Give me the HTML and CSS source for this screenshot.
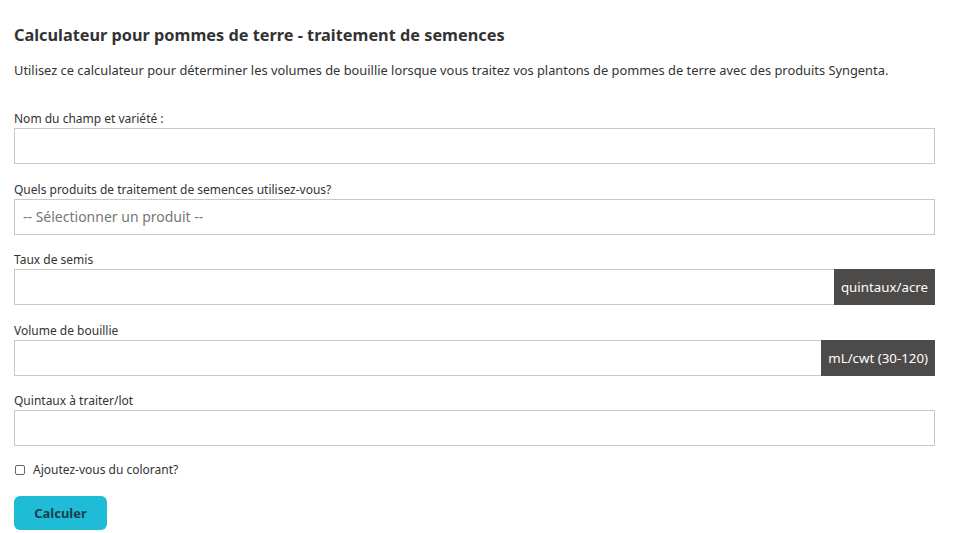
FILE: index.html
```html
<!DOCTYPE html>
<html lang="fr">
<head>
<meta charset="utf-8">
<title>Calculateur</title>
<link rel="stylesheet" href="styles.css">
</head>
<body>
<main class="calc">
  <h1 class="title">Calculateur pour pommes de terre - traitement de semences</h1>
  <p class="intro">Utilisez ce calculateur pour déterminer les volumes de bouillie lorsque vous traitez vos plantons de pommes de terre avec des produits Syngenta.</p>
  <form class="form">
    <div class="field">
      <label class="label">Nom du champ et variété :</label>
      <input class="input" type="text">
    </div>
    <div class="field">
      <label class="label">Quels produits de traitement de semences utilisez-vous?</label>
      <div class="input select">-- Sélectionner un produit --</div>
    </div>
    <div class="field">
      <label class="label">Taux de semis</label>
      <div class="group">
        <input class="input grow" type="text">
        <span class="addon">quintaux/acre</span>
      </div>
    </div>
    <div class="field">
      <label class="label">Volume de bouillie</label>
      <div class="group">
        <input class="input grow" type="text">
        <span class="addon">mL/cwt (30-120)</span>
      </div>
    </div>
    <div class="field">
      <label class="label">Quintaux à traiter/lot</label>
      <input class="input" type="text">
    </div>
    <label class="check"><span class="box"></span>Ajoutez-vous du colorant?</label>
    <button class="btn" type="button">Calculer</button>
  </form>
</main>
</body>
</html>
```
FILE: styles.css
```css
* { box-sizing: border-box; }
html, body { margin: 0; background: #fff; }
body {
  font-family: "Noto Sans", "Open Sans", sans-serif;
  color: #333;
}
.calc {
  width: 921px;
  margin-left: 14px;
  padding-top: 23px;
}
.title {
  margin: 0;
  font-size: 16.3px;
  font-weight: 700;
  line-height: 24px;
  color: #333;
}
.intro {
  margin: 13px 0 0;
  font-size: 12.85px;
  line-height: 20px;
}
.form {
  margin-top: 31px;
  display: flex;
  flex-direction: column;
}
.field {
  display: flex;
  flex-direction: column;
  margin-bottom: 17.5px;
}
.label {
  font-size: 12px;
  line-height: 16px;
  margin-bottom: 1px;
}
.input {
  display: block;
  width: 100%;
  height: 36px;
  border: 1px solid #c8c8c8;
  background: #fff;
  margin: 0;
  padding: 0 8px;
  font: inherit;
  font-size: 14px;
  outline: none;
}
.select {
  display: flex;
  align-items: center;
  color: #777;
}
.group {
  display: flex;
  height: 36px;
}
.grow { flex: 1; width: auto; border-right: none; }
.addon {
  display: flex;
  align-items: center;
  padding: 0 7px;
  background: #4d4b4a;
  color: #fff;
  font-size: 13.3px;
}
.check {
  display: flex;
  align-items: center;
  font-size: 12px;
  line-height: 18px;
  margin-top: -2.5px;
}
.box {
  width: 10px;
  height: 10px;
  border: 1px solid #666;
  border-radius: 2px;
  margin: 0 8px 0 1px;
}
.btn {
  align-self: flex-start;
  margin-top: 17px;
  width: 93px;
  height: 34px;
  border: none;
  border-radius: 6px;
  background: #1fbcd8;
  color: #173f4f;
  font: inherit;
  font-size: 13px;
  font-weight: 700;
}
```
